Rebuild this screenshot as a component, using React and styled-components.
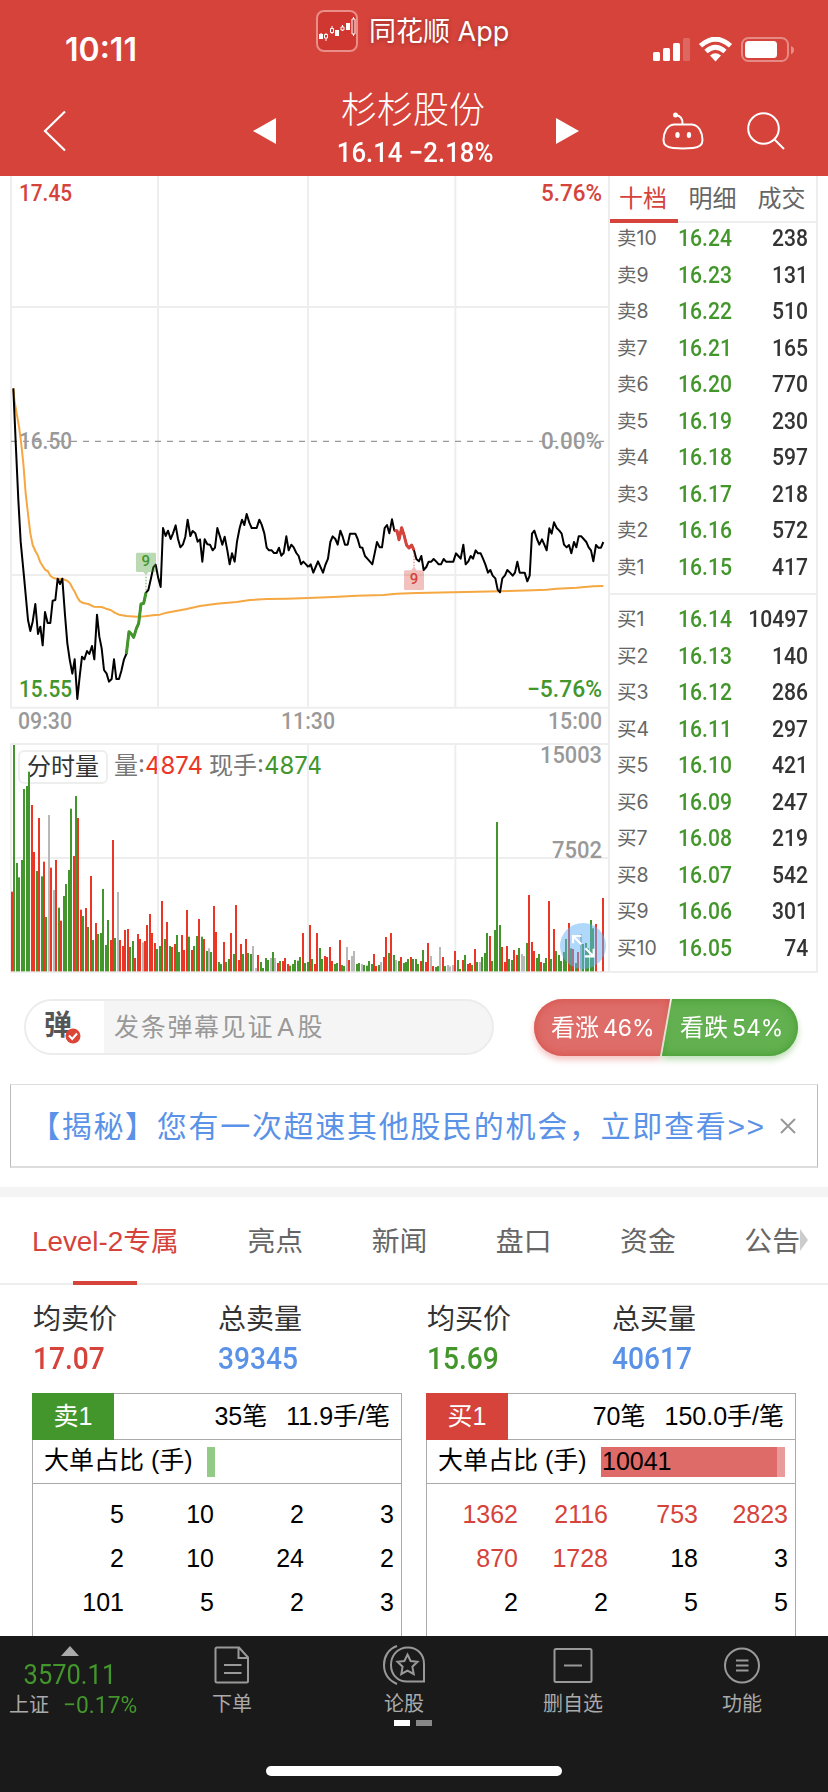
import { useState } from "react";
import styled, { createGlobalStyle } from "styled-components";

const RED = "#d5433b";
const GREEN = "#43962b";
const BLUE = "#5a92e8";

// chart drawing units: 3 per css pixel
const PRICE_AM = "40,55 47,215 55,390 62,515 72,620 84,750 91,783 98,755 106,702 114,792 121,770 128,826 135,726 143,759 151,759 158,692 166,690 173,626 180,642 187,626 195,735 202,820 209,868 217,911 224,868 232,987 239,920 246,860 253,868 261,843 268,852 276,828 283,868 291,734 298,800 305,835 312,900 320,911 327,935 335,927 342,868 349,927 357,927 364,903 372,868 379,852 387,785 394,792 401,802 409,776 416,760 423,702 431,700 438,668 445,660 453,625 460,592 467,584 475,625 482,651 489,474 497,498 504,482 512,507 519,490 527,466 534,507 541,532 549,523 556,500 563,449 571,498 578,483 586,490 593,515 600,508 607,575 614,508 622,523 630,524 638,541 645,533 652,474 660,500 667,524 674,500 682,541 689,583 696,550 704,575 711,515 719,474 726,449 733,465 740,432 748,458 755,474 770,474 778,449 785,464 793,490 800,533 807,541 815,541 822,549 830,549 837,533 844,557 851,549 859,499 866,541 874,524 881,532 889,549 896,558 903,583 910,575 918,583 925,591";
const PRICE_PM = "25,231 32,223 40,248 47,231 54,214 62,232 69,248 76,225 84,206 91,156 98,139 106,147 113,164 121,122 128,140 135,164 143,164 150,131 166,131 173,147 180,172 187,173 195,198 202,206 210,215 217,223 224,190 231,156 239,172 246,172 254,114 261,105 268,130 276,88 283,122 291,122 297,149 305,113 312,135 320,166 327,174 335,165 342,181 349,207 357,214 364,198 371,240 379,231 386,215 394,215 401,207 409,215 416,223 423,223 431,207 438,215 460,215 468,190 475,198 482,206 490,164 497,223 505,214 512,198 519,206 527,181 534,190 542,190 549,206 556,223 564,248 571,240 578,257 586,265 593,299 600,307 607,265 615,256 622,240 630,248 638,257 645,248 652,215 659,248 674,248 682,274 689,257 696,131 703,122 711,147 718,164 726,148 733,164 740,181 748,115 755,131 762,97 770,114 778,122 785,131 792,164 800,172 807,165 814,190 822,156 829,172 836,139 844,139 851,147 859,156 866,172 873,181 880,214 888,165 895,173 903,173 910,156";
const RISE = "379,852 387,785 394,792 401,802 409,776 416,760 423,702 431,700 438,668";
const FALL = "283,122 291,122 297,149 305,113 312,135 320,166 327,174 335,165 342,181";
const AVG_AM = "40,55 43,90 50,130 57,170 63,215 70,280 77,370 85,440 91,490 98,525 106,543 113,555 121,577 128,588 136,600 143,603 151,617 160,624 175,627 187,626 195,630 202,632 210,640 217,653 224,665 232,682 240,694 250,699 265,702 281,710 305,711 318,716 332,720 344,728 357,734 380,738 410,740 435,739 465,735 480,734 500,728 560,717 600,708 650,701 710,696 750,690 800,687 860,686 925,684";
const AVG_PM = "25,324 100,321 170,317 250,315 290,311 350,309 460,307 600,304 700,301 740,299 770,296 830,293 880,289 910,288";

// one bar a minute: colour letter and the y of its top
const VOLUME = `
r470 g30 g384 g427 g375 g162 g153 g110 r210 r351
g408 r249 g424 r380 g546 x240 r398 x465 r375 g518
r557 g483 g447 g405 g221 r363 g183 r249 r524 g543
r519 g576 r423 g615 r564 g597 g594 g462 g630 g555
r615 r315 g609 x471 r615 r633 r585 r582 g636 g618
r669 r597 r612 x622 r618 r570 r537 r594 r624 g642
g633 r498 g612 r561 g633 r636 r627 g600 g651 r600
r645 r525 g605 r645 g633 g603 r552 g605 r612 g648
x640 g651 r513 r591 g681 g687 r621 g681 g672 r594
g657 r510 r675 r627 g657 r612 g654 g657 x633 x699
r660 g681 g699 g669 g675 x669 g651 x669 r684 g678
r678 r669 r687 g692 g687 g675 g677 g666 r594 g684
g681 r570 g672 r687 r594 g639 g672 r663 r666 r636
r678 g687 g684 r615 g690 g693 x636 r675 x663 x648
g687 g684 x687 g690 g692 g678 g687 r657 r693 g690
x681 r666 r606 g654 r594 g660 x675 g678 r666 g684
g681 g672 r666 g672 g672 g687 r678 g645 r681 r624
x663 r693 g696 g693 x636 r666 g693 x690 x694 x690
r648 g675 g702 r675 g660 r687 r684 g690 r642 g681
x681 g666 g654 g594 r603 g678 g585 g261 g570 r636
r681 r633 g672 g675 r645 r660 g639 x657 x663 g624
r480 r621 r648 g669 g657 r681 g684 g669 r498 g672
r582 g648 g660 g678 g651 g612 r564 g640 r642 g684
r651 x597 g627 g624 g640 g555 g580 r567 x708 x708
r489`.trim().split(/\s+/);

const BAR_COLORS = { r: "#eb3626", g: "#43962b", x: "#b8b8b8" };

const SELLS = [
    ["卖10", "16.24", 238], ["卖9", "16.23", 131], ["卖8", "16.22", 510], ["卖7", "16.21", 165],
    ["卖6", "16.20", 770], ["卖5", "16.19", 230], ["卖4", "16.18", 597], ["卖3", "16.17", 218],
    ["卖2", "16.16", 572], ["卖1", "16.15", 417],
];

const BUYS = [
    ["买1", "16.14", 10497], ["买2", "16.13", 140], ["买3", "16.12", 286], ["买4", "16.11", 297],
    ["买5", "16.10", 421], ["买6", "16.09", 247], ["买7", "16.08", 219], ["买8", "16.07", 542],
    ["买9", "16.06", 301], ["买10", "16.05", 74],
];

const STATS = [
    { label: "均卖价", value: "17.07", color: RED, width: 185 },
    { label: "总卖量", value: "39345", color: BLUE, width: 209 },
    { label: "均买价", value: "15.69", color: GREEN, width: 185 },
    { label: "总买量", value: "40617", color: BLUE, width: 180 },
];

const QUEUES = [
    {
        name: "卖1", color: GREEN, count: "35笔", average: "11.9手/笔",
        orders: [5, 10, 2, 3, 2, 10, 24, 2, 101, 5, 2, 3],
    },
    {
        name: "买1", color: RED, count: "70笔", average: "150.0手/笔", big: 10041,
        orders: [1362, 2116, 753, 2823, 870, 1728, 18, 3, 2, 2, 5, 5],
    },
];

const TABS = ["Level-2专属", "亮点", "新闻", "盘口", "资金", "公告"];

function ChartLabel({ x, y, width, end, color, weight = 500, children }) {
    return (
        <text
            x={x * 3}
            y={y * 3}
            textAnchor={end ? "end" : "start"}
            textLength={width * 3}
            lengthAdjust="spacingAndGlyphs"
            fill={color}
            fontWeight={weight}
        >{children}</text>
    );
}

function Chart() {
    return (
        <ChartArea>
            <VolumeHead>
                <VolumeChip>分时量</VolumeChip>
                <p>量:<b>4874</b></p>
                <p>现手:<i>4874</i></p>
            </VolumeHead>
            <ChartSvg viewBox="0 528 1830 2391">
                <g stroke="#eeeeee" strokeWidth="6">
                    <path d="M33,528V2124M474,528V2124M924,528V2124M1366,528V2124" />
                    <path d="M30,921H1827M30,1725H1827M30,2123H1827" />
                    <path d="M33,2229V2918M474,2229V2918M924,2229V2918M1366,2229V2918" />
                    <path d="M30,2232H1827M30,2574H1827M30,2916H1827" />
                </g>
                <path d="M33,1324H1812" stroke="#999999" strokeWidth="3.5" strokeDasharray="18 18" />
                <g fontFamily="Roboto, sans-serif" fontSize="72">
                    <ChartLabel x={19} y={201} width={53} color={RED}>17.45</ChartLabel>
                    <ChartLabel x={602} y={201} width={61} end color={RED}>5.76%</ChartLabel>
                    <ChartLabel x={19} y={449} width={53} color="#999">16.50</ChartLabel>
                    <ChartLabel x={602} y={449} width={61} end color="#999">0.00%</ChartLabel>
                    <ChartLabel x={19} y={696.5} width={53} color={GREEN}>15.55</ChartLabel>
                    <ChartLabel x={602} y={696.5} width={75} end color={GREEN}>−5.76%</ChartLabel>
                    <ChartLabel x={18} y={728.5} width={54} color="#999">09:30</ChartLabel>
                    <ChartLabel x={281} y={728.5} width={54} color="#999">11:30</ChartLabel>
                    <ChartLabel x={602} y={728.5} width={54} end color="#999">15:00</ChartLabel>
                    <ChartLabel x={602} y={762.5} width={62} end color="#999">15003</ChartLabel>
                    <ChartLabel x={602} y={857.5} width={50} end color="#999">7502</ChartLabel>
                </g>
                <g fill="none" strokeLinejoin="round">
                    <polyline points={AVG_AM} transform="translate(0,1110)" stroke="#f5a742" strokeWidth="6" />
                    <polyline points={AVG_PM} transform="translate(900,1470)" stroke="#f5a742" strokeWidth="6" />
                    <polyline points={PRICE_AM} transform="translate(0,1110)" stroke="#000" strokeWidth="6" />
                    <polyline points={PRICE_PM} transform="translate(900,1470)" stroke="#000" strokeWidth="6" />
                    <polyline points={RISE} transform="translate(0,1110)" stroke={GREEN} strokeWidth="9" />
                    <polyline points={FALL} transform="translate(900,1470)" stroke={RED} strokeWidth="9" />
                </g>
                <g transform="translate(0,1110)">
                    <path d="M412,548h52q4,0 4,4v50q0,4 -4,4h-18l-8,10l-8,-10h-18q-4,0 -4,-4v-50q0,-4 4,-4z" fill={GREEN} opacity="0.36" />
                    <path d="M438,620V664" stroke={GREEN} strokeWidth="4" strokeDasharray="5 4" opacity="0.6" />
                    <text x="437" y="587" fontSize="45" fontFamily="Roboto, sans-serif" fontWeight="500" textAnchor="middle" fill={GREEN}>9</text>
                </g>
                <g transform="translate(900,1470)">
                    <path d="M316,241h18l8,-12l8,12h18q4,0 4,4v51q0,4 -4,4h-52q-4,0 -4,-4v-51q0,-4 4,-4z" fill={RED} opacity="0.33" />
                    <path d="M342,188V228" stroke={RED} strokeWidth="4" strokeDasharray="5 4" opacity="0.6" />
                    <text x="342" y="282" fontSize="45" fontFamily="Roboto, sans-serif" fontWeight="500" textAnchor="middle" fill={RED}>9</text>
                </g>
                <g transform="translate(0,2205)">
                    {VOLUME.map((bar, i) => {
                        const top = Number(bar.slice(1));
                        return <rect key={i} x={Math.floor(11.5 + i * 2.4625) * 3} y={top} width="6" height={709 - top} fill={BAR_COLORS[bar[0]]} />;
                    })}
                </g>
                <g transform="translate(1749,2838)">
                    <circle r="69" fill="#61b1f8" opacity="0.5" />
                    <path d="M-5,-5L-29,-29M-30,-8V-30H-5M7,7L31,31M32,8V31H6" fill="none" stroke="#fff" strokeWidth="6.5" />
                </g>
            </ChartSvg>
        </ChartArea>
    );
}

function Book() {
    return (
        <BookPanel>
            <BookTabs>
                <BookTab $active>十档</BookTab>
                <BookTab>明细</BookTab>
                <BookTab>成交</BookTab>
            </BookTabs>
            <BookSide>
                {SELLS.map(([name, price, amount]) => (
                    <BookRow key={name}><span>{name}</span><Din $color={GREEN}>{price}</Din><Din $right $color="#333">{amount}</Din></BookRow>
                ))}
            </BookSide>
            <BookSide $buy>
                {BUYS.map(([name, price, amount]) => (
                    <BookRow key={name}><span>{name}</span><Din $color={GREEN}>{price}</Din><Din $right $color="#333">{amount}</Din></BookRow>
                ))}
            </BookSide>
        </BookPanel>
    );
}

function Queue({ name, color, count, average, big, orders }) {
    return (
        <QueueBox>
            <QueueHead>
                <QueueName $color={color}>{name}</QueueName>
                <span>{count}</span>
                <span>{average}</span>
            </QueueHead>
            <QueueRatio>
                <span>大单占比 (手)</span>
                {big ? <BigBar>{big}</BigBar> : <SmallBar />}
            </QueueRatio>
            <Orders>
                {orders.map((order, i) => <Order key={i} $big={order > 500}>{order}</Order>)}
            </Orders>
        </QueueBox>
    );
}

export default function App() {
    const [tab, setTab] = useState(0);

    return (
        <Page>
            <GlobalStyle />
            <Header>
                <StatusBar>
                    <Clock>10:11</Clock>
                    <Brand>
                        <svg width="42" height="42" viewBox="0 0 42 42">
                            <rect x="1" y="1" width="40" height="40" rx="7" fill="#cf3730" stroke="#e98e89" strokeWidth="2" />
                            <path d="M5 23V29M10 23V31M16 16V24M21 20V26M26.500 15V21M32 13V20M37.500 7V26" stroke="#fff" strokeWidth="1" />
                            <path d="M3 24h4v5h-4zM19 20h4v6h-4zM30 13h4v7h-4z" fill="#fff" />
                            <path d="M8.500 24.500h3v3.500h-3zM14.500 18.500h3v4h-3zM25 17h3v3h-3zM36 9h3v15h-3z" fill="#cf3730" stroke="#fff" strokeWidth="1" />
                        </svg>
                        <span>同花顺 App</span>
                    </Brand>
                    <svg width="142" height="26" viewBox="0 0 142 26">
                        <g fill="#fff">
                            <rect x="0" y="15" width="7" height="9" rx="1.500" />
                            <rect x="10" y="11" width="7" height="13" rx="1.500" />
                            <rect x="20" y="6" width="7" height="18" rx="1.500" />
                            <rect x="30" y="1" width="7" height="23" rx="1.500" opacity="0.2" />
                            <rect x="92" y="4" width="32" height="17" rx="3.500" />
                            <path d="M138 9v8q3 -1 3 -4t-3 -4z" opacity="0.4" />
                        </g>
                        <rect x="89" y="1" width="46" height="23" rx="6.500" fill="none" stroke="#fff" strokeWidth="2" opacity="0.38" />
                        <g fill="none" stroke="#fff" strokeWidth="4.800">
                            <path d="M47.500 8.800Q62.500 -4.500 77.500 8.800" />
                            <path d="M53 14.500Q62.500 6 72 14.500" />
                        </g>
                        <path d="M57 18.500Q62.500 14 68 18.500L62.500 24.500z" fill="#fff" />
                    </svg>
                </StatusBar>
                <NavBar>
                    <svg width="24" height="42" viewBox="0 0 24 42"><path d="M22 1.500L2 21L22 40.500" fill="none" stroke="#fff" strokeWidth="2.200" /></svg>
                    <svg width="23" height="26" viewBox="0 0 23 26"><path d="M23 0V26L0 13z" fill="#fff" /></svg>
                    <StockTitle>
                        <h1>杉杉股份</h1>
                        <p>16.14 −2.18%</p>
                    </StockTitle>
                    <svg width="23" height="26" viewBox="0 0 23 26"><path d="M0 0V26L23 13z" fill="#fff" /></svg>
                    <svg width="42" height="38" viewBox="0 0 42 38" fill="none" stroke="#fff" strokeWidth="2">
                        <path d="M12 12.500H30C37 13 40.500 21 40.500 28C40.500 33.500 37 35.500 31 36Q21 36.800 11 36C5 35.500 1.500 33.500 1.500 28C1.500 21 5 13 12 12.500z" />
                        <path d="M20.500 12Q21 4 13.500 3" />
                        <circle cx="13.500" cy="3" r="2.500" fill="#fff" stroke="none" />
                        <ellipse cx="15.500" cy="23" rx="2.200" ry="3" fill="#fff" stroke="none" />
                        <ellipse cx="27" cy="23" rx="2.200" ry="3" fill="#fff" stroke="none" />
                    </svg>
                    <svg width="38" height="38" viewBox="0 0 38 38" fill="none" stroke="#fff" strokeWidth="2"><circle cx="16.500" cy="16.500" r="15.300" /><path d="M27.500 27.500L37 37" /></svg>
                </NavBar>
            </Header>

            <Market>
                <Chart />
                <Book />
            </Market>

            <Interact>
                <Danmu>
                    <DanmuIcon>
                        弹
                        <svg width="16" height="16" viewBox="0 0 16 16"><circle cx="8" cy="8" r="7.500" fill="#dc4436" /><path d="M4 7.500L7.200 11L12 5.500" fill="none" stroke="#fff" strokeWidth="2" /></svg>
                    </DanmuIcon>
                    <DanmuInput>发条弹幕见证<span>A</span>股</DanmuInput>
                </Danmu>
                <Vote>
                    <BullShadow><Bull>看涨<em>46%</em></Bull></BullShadow>
                    <BearShadow><Bear>看跌<em>54%</em></Bear></BearShadow>
                </Vote>
            </Interact>

            <Notice>
                <p>【揭秘】您有一次超速其他股民的机会，立即查看&gt;&gt;</p>
                <svg width="16" height="16" viewBox="0 0 16 16"><path d="M1 1L15 15M15 1L1 15" stroke="#999" strokeWidth="2" /></svg>
            </Notice>

            <Tabs>
                {TABS.map((name, i) => (
                    <Tab key={name} $active={tab === i} onClick={() => setTab(i)}>{name}</Tab>
                ))}
                <More width="8" height="22" viewBox="0 0 8 22"><path d="M0 0V22L8 11z" fill="#ccc" /></More>
            </Tabs>

            <Stats>
                {STATS.map(({ label, value, color, width }) => (
                    <Stat key={label} $width={width}>
                        <p>{label}</p>
                        <Din $size={32} $color={color}>{value}</Din>
                    </Stat>
                ))}
            </Stats>

            <Queues>
                {QUEUES.map((queue) => <Queue key={queue.name} {...queue} />)}
            </Queues>

            <BottomBar>
                <BottomItems>
                    <IndexBox>
                        <svg width="18" height="10" viewBox="0 0 18 10"><path d="M9 0L18 10H0z" fill="#aaa" /></svg>
                        <Din $size={28} $color={GREEN} $weight={400} $scale={0.91} $center>3570.11</Din>
                        <p>上证<Din $size={24} $color={GREEN} $weight={400} $scale={0.95}>−0.17%</Din></p>
                    </IndexBox>
                    <BottomItem $left={56}>
                        <svg width="40" height="40" viewBox="0 0 40 40"><path d="M3.500 4Q3.500 2.500 5 2.500H27L36 12.500V36Q36 37.500 34.500 37.500H5Q3.500 37.500 3.500 36zM26.500 3V13H36M12 20H29.500M12 28H29.500" /></svg>
                        下单
                    </BottomItem>
                    <BottomItem $left={104}>
                        <svg width="44" height="40" viewBox="0 0 44 40"><path d="M26 2.500C15 2.500 9 11 9 20C9 29 15 36.500 25 36.500H42V19C42 9 35 2.500 26 2.500zM15 1C6 4 2 12 2 20C2 28 6 35 15 39" /><path d="M25.500 9.500L28.600 16L35.500 16.800L30.400 21.700L31.700 29L25.500 25.600L19.300 29L20.600 21.700L15.500 16.800L22.400 16z" /></svg>
                        论股
                    </BottomItem>
                    <BottomItem $left={101}>
                        <svg width="40" height="40" viewBox="0 0 40 40"><rect x="1.500" y="4" width="37" height="33" rx="1.500" /><path d="M11 20.500H29" /></svg>
                        删自选
                    </BottomItem>
                    <BottomItem $left={101}>
                        <svg width="40" height="40" viewBox="0 0 40 40"><circle cx="20" cy="20.500" r="17" /><path d="M14 15.500H26.500M14 20.500H26.500M14 25.500H26.500" /></svg>
                        功能
                    </BottomItem>
                </BottomItems>
                <Pager><Dot $on /><Dot /></Pager>
                <HomeIndicator />
            </BottomBar>
        </Page>
    );
}

const GlobalStyle = createGlobalStyle`
    * {
        box-sizing: border-box;
    }

    body {
        margin: 0;
        background: #ffffff;
    }

    h1, p {
        margin: 0;
    }

    svg {
        display: block;
        flex-shrink: 0;
    }
`

const Page = styled.main`
    width: 828px;
    height: 1792px;
    overflow: hidden;
    display: flex;
    flex-direction: column;
    background: #ffffff;
    font-family: "Liberation Sans", "Noto Sans CJK SC", sans-serif;
    color: #333333;
    white-space: nowrap;

    > * {
        flex-shrink: 0;
    }
`

// narrow upright digits
const Din = styled.span`
    display: inline-block;
    font-family: Roboto, sans-serif;
    font-weight: ${({ $weight }) => $weight || 500};
    font-size: ${({ $size }) => $size || 24}px;
    color: ${({ $color }) => $color};
    transform: scaleX(${({ $scale }) => $scale || 0.88});
    transform-origin: ${({ $right, $center }) => $right ? "right" : $center ? "center" : "left"};
`

const Header = styled.header`
    height: 176px;
    background: ${RED};
    color: #ffffff;
`

const StatusBar = styled.div`
    height: 76px;
    display: flex;
    padding: 0 33px 0 65px;

    > svg {
        margin: 37px 0 0 auto;
    }
`

const Clock = styled.div`
    width: 251px;
    padding-top: 31px;
    font-family: Inter, sans-serif;
    font-weight: 600;
    font-size: 32px;
    line-height: 38px;
`

const Brand = styled.div`
    display: flex;
    gap: 11px;
    padding-top: 10px;
    font-size: 28px;
    line-height: 44px;

    span {
        font-family: Inter, "Noto Sans CJK SC", sans-serif;
        font-size: 27px;
        text-shadow: 0 1px 4px rgba(0, 0, 0, 0.3);
    }
`

const NavBar = styled.div`
    height: 100px;
    display: flex;
    align-items: flex-start;
    padding-left: 43px;

    > svg:nth-child(1) { margin-top: 34px; }
    > svg:nth-child(2) { margin: 42px 0 0 186px; }
    > svg:nth-child(4) { margin-top: 42px; }
    > svg:nth-child(5) { margin: 36px 0 0 83px; }
    > svg:nth-child(6) { margin: 36px 0 0 43px; }
`

const StockTitle = styled.div`
    width: 280px;
    padding-top: 13px;
    text-align: center;

    h1 {
        padding-right: 6px;
        font-size: 36px;
        font-weight: 300;
        line-height: 44px;
    }

    p {
        padding-right: 2px;
        font-family: Roboto, sans-serif;
        font-weight: 500;
        font-size: 28px;
        line-height: 40px;
        transform: scaleX(0.92);
    }
`

const Market = styled.section`
    height: 797px;
    display: flex;
`

const ChartArea = styled.div`
    position: relative;
    width: 608px;
    height: 797px;
`

const ChartSvg = styled.svg`
    position: relative;
    width: 610px;
    height: 797px;
`

const VolumeHead = styled.div`
    position: absolute;
    top: 574px;
    left: 18px;
    display: flex;
    align-items: flex-start;
    gap: 6px;
    font-size: 24px;
    line-height: 31px;
    color: #777777;
    font-family: Inter, "Noto Sans CJK SC", sans-serif;

    b, i {
        font-style: normal;
        font-weight: 400;
        font-size: 24px;
        color: #eb3626;
    }

    i {
        color: ${GREEN};
    }
`

const VolumeChip = styled.div`
    height: 34px;
    padding: 0 7px;
    border: 2px solid #eeeeee;
    border-radius: 6px;
    color: #333333;
    line-height: 30px;
`

const BookPanel = styled.aside`
    width: 210px;
    border: 2px solid #eeeeee;
    border-top: none;
`

const BookTabs = styled.div`
    height: 47px;
    display: flex;
    border-bottom: 2px solid #eeeeee;
`

const BookTab = styled.div`
    width: 70px;
    height: 47px;
    flex: ${({ $active }) => $active ? "0 0 68px" : "1"};
    padding: ${({ $active }) => $active ? "0 2px 0 0" : "0"};
    font-size: 24px;
    line-height: 46px;
    text-align: center;
    color: ${({ $active }) => $active ? RED : "#666666"};
    border-bottom: ${({ $active }) => $active ? `4px solid ${RED}` : "none"};
`

const BookSide = styled.div`
    padding-top: ${({ $buy }) => $buy ? 6 : 0}px;
    margin-top: ${({ $buy }) => $buy ? 8 : -3}px;
    border-top: ${({ $buy }) => $buy ? "2px solid #eeeeee" : "none"};
`

const BookRow = styled.div`
    height: 36.5px;
    display: grid;
    grid-template-columns: 61px 1fr auto;
    align-items: center;
    padding: 0 8px 0 7px;
    line-height: 36px;

    > span:first-child {
        font-family: Inter, "Noto Sans CJK SC", sans-serif;
        font-size: 19.500px;
        color: #666666;
    }
`

const Interact = styled.section`
    height: 111px;
    display: flex;
    justify-content: space-between;
    padding: 26px 30px 0 24px;
`

const Danmu = styled.div`
    width: 470px;
    height: 56px;
    display: flex;
    border: 2px solid #ececec;
    border-radius: 28px;
    background: #f5f5f5;
    overflow: hidden;
`

const DanmuIcon = styled.div`
    position: relative;
    width: 78px;
    padding-left: 18px;
    background: #ffffff;
    font-size: 28px;
    font-weight: 700;
    line-height: 50px;
    color: #555555;

    svg {
        position: absolute;
        left: 39px;
        top: 27px;
    }
`

const DanmuInput = styled.div`
    padding-left: 10px;
    font-size: 25px;
    line-height: 52px;
    letter-spacing: 1.7px;
    color: #999999;

    span {
        margin: 0 2px 0 3px;
    }
`

const Vote = styled.div`
    width: 264px;
    height: 57px;
    display: flex;
    font-size: 24px;
    line-height: 57px;
    color: #ffffff;

    em {
        margin-left: 4px;
        font-style: normal;
        font-family: Inter, sans-serif;
        font-size: 23px;
    }
`

const BullShadow = styled.div`
    filter: drop-shadow(0 4px 3px rgba(224, 107, 103, 0.4));
`

const BearShadow = styled.div`
    margin-left: -8px;
    filter: drop-shadow(0 4px 3px rgba(98, 176, 79, 0.4));
`

const Bull = styled.div`
    width: 136px;
    height: 57px;
    padding-left: 17px;
    border-radius: 29px 0 0 29px;
    background: #de6c68;
    box-shadow: inset 0 0 8px #d5504a;
    clip-path: polygon(0 0, 100% 0, 126px 100%, 0 100%);
`

const Bear = styled.div`
    width: 136px;
    height: 57px;
    padding-left: 18px;
    border-radius: 0 29px 29px 0;
    background: #62b04f;
    box-shadow: inset 0 0 8px #439a30;
    clip-path: polygon(10px 0, 100% 0, 100% 100%, 0 100%);
`

const Notice = styled.section`
    width: 808px;
    height: 84px;
    margin-left: 10px;
    display: flex;
    align-items: center;
    padding: 0 21px 0 19px;
    border: 1px solid #bbbbbb;
    border-top-color: #dddddd;
    border-bottom: 2px solid #dddddd;

    p {
        flex: 1;
        padding-bottom: 4px;
        font-size: 30px;
        letter-spacing: 1.7px;
        color: ${BLUE};
    }
`

const Tabs = styled.nav`
    position: relative;
    height: 98px;
    margin-top: 19px;
    display: flex;
    justify-content: space-between;
    padding: 0 28px 0 32px;
    border-top: 10px solid #f4f4f4;
    border-bottom: 2px solid #eeeeee;
`

const Tab = styled.div`
    position: relative;
    font-size: 27.800px;
    line-height: 89px;
    color: ${({ $active }) => $active ? RED : "#666666"};

    &::after {
        content: "";
        display: ${({ $active }) => $active ? "block" : "none"};
        position: absolute;
        left: calc(50% - 32px);
        bottom: -2px;
        width: 64px;
        height: 4px;
        background: ${RED};
    }
`

const More = styled.svg`
    position: absolute;
    right: 20px;
    top: 32px;
`

const Stats = styled.section`
    height: 108px;
    display: flex;
    padding: 15px 0 0 33px;
`

const Stat = styled.div`
    width: ${({ $width }) => $width}px;

    p {
        font-size: 28px;
        line-height: 40px;
    }

    span {
        line-height: 36px;
    }
`

const Queues = styled.section`
    height: 243px;
    display: flex;
    gap: 24px;
    padding-left: 32px;
`

const QueueBox = styled.div`
    width: 370px;
    height: 243px;
    border: 1px solid #aaaaaa;
    border-bottom: none;
    color: #000000;
    font-size: 25px;
`

const QueueHead = styled.div`
    height: 46px;
    display: flex;
    gap: 19px;
    padding-right: 11px;
    border-bottom: 1px solid #aaaaaa;
    line-height: 45px;
`

const QueueName = styled.div`
    width: 82px;
    height: 47px;
    margin: -1px auto 0 -1px;
    background: ${({ $color }) => $color};
    color: #ffffff;
    line-height: 47px;
    text-align: center;
`

const QueueRatio = styled.div`
    height: 44px;
    display: flex;
    align-items: center;
    padding-left: 11px;
    border-bottom: 1px solid #aaaaaa;

    > span {
        width: 163px;
        padding-bottom: 3px;
        line-height: 38px;
    }
`

const SmallBar = styled.div`
    width: 8px;
    height: 30px;
    background: #92ca86;
`

const BigBar = styled.div`
    width: 184px;
    height: 30px;
    padding-left: 1px;
    background: #de6b68;
    border-right: 8px solid #e89b98;
    line-height: 28px;
`

const Orders = styled.div`
    display: grid;
    grid-template-columns: repeat(4, 90px);
    grid-auto-rows: 44px;
    padding-top: 8px;
    margin-left: 1px;
`

const Order = styled.div`
    text-align: right;
    line-height: 44px;
    color: ${({ $big }) => $big ? RED : "#000000"};
`

const BottomBar = styled.footer`
    height: 156px;
    background: #1a1a1a;
    color: #aaaaaa;
`

const BottomItems = styled.div`
    height: 84px;
    display: flex;
`

const IndexBox = styled.div`
    width: 142px;
    display: flex;
    flex-direction: column;
    align-items: center;
    padding: 10px 2px 0 0;

    > span {
        margin-top: 2px;
        line-height: 34px;
    }

    p {
        width: 142px;
        display: flex;
        gap: 14px;
        padding-left: 10px;
        font-size: 20px;
        line-height: 26px;
    }
`

const BottomItem = styled.div`
    width: 68px;
    margin-left: ${({ $left }) => $left}px;
    display: flex;
    flex-direction: column;
    align-items: center;
    padding-top: 9px;
    font-size: 20px;
    line-height: 38px;

    svg {
        fill: none;
        stroke: #999999;
        stroke-width: 2;
    }
`

const Pager = styled.div`
    display: flex;
    gap: 6px;
    padding-left: 394px;
`

const Dot = styled.div`
    width: 16px;
    height: 6px;
    background: ${({ $on }) => $on ? "#ffffff" : "#888888"};
`

const HomeIndicator = styled.div`
    width: 296px;
    height: 10px;
    margin: 40px 0 0 266px;
    border-radius: 5px;
    background: #ffffff;
`
